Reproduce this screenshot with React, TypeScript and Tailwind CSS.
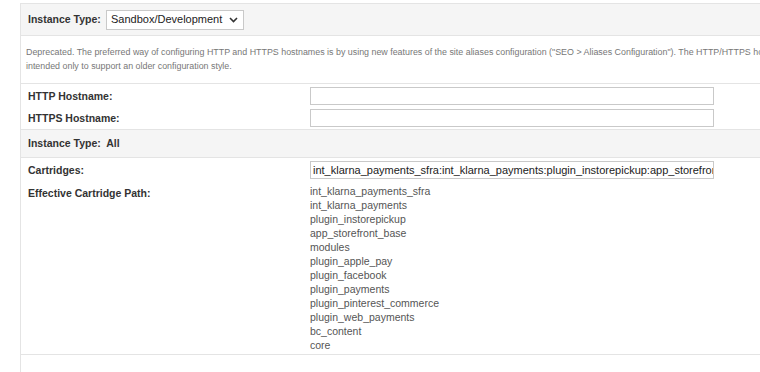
const cartridges = [
  "int_klarna_payments_sfra",
  "int_klarna_payments",
  "plugin_instorepickup",
  "app_storefront_base",
  "modules",
  "plugin_apple_pay",
  "plugin_facebook",
  "plugin_payments",
  "plugin_pinterest_commerce",
  "plugin_web_payments",
  "bc_content",
  "core",
];

const cartridgePath = cartridges.join(":");

function FieldRow({ label, children }: { label: string; children: React.ReactNode }) {
  return (
    <div className="flex items-start">
      <div className="w-[289px] shrink-0 pl-[7px] font-bold text-[#333] leading-[18px]">
        {label}
      </div>
      <div className="flex-1">{children}</div>
    </div>
  );
}

function TextInput({ value = "" }: { value?: string }) {
  return (
    <div className="w-[404px] h-[18px] border border-[#c9c9c9] bg-white px-[2px] overflow-hidden whitespace-nowrap text-[11px] leading-[16px] text-[#222]">
      {value}
    </div>
  );
}

export default function App() {
  return (
    <div
      className="w-[760px] h-[372px] overflow-hidden bg-white text-[10.5px]"
      style={{ fontFamily: '"Liberation Sans", Arial, sans-serif' }}
    >
      <div className="ml-[20px] mt-[3px] w-[820px] border-l border-t border-[#e4e4e4]">
        {/* Instance type selector */}
        <div className="h-[32px] bg-[#f5f5f5] border-b border-[#e4e4e4] flex items-center pl-[7px]">
          <span className="font-bold text-[#333] w-[78px]">Instance Type:</span>
          <div className="h-[20px] w-[138px] border border-[#c9c9c9] bg-white flex items-center pl-[4px] gap-[7px] text-[11px] text-[#222]">
            <span>Sandbox/Development</span>
            <svg width="9" height="6" viewBox="0 0 9 6" fill="none">
              <path d="M1 1l3.5 3.5L8 1" stroke="#333" strokeWidth="1.6" />
            </svg>
          </div>
        </div>

        {/* Deprecation note */}
        <div className="border-b border-[#e4e4e4] pl-[5px] pt-[9px] pb-[10px] text-[8.9px] leading-[14px] text-[#777] whitespace-nowrap">
          Deprecated. The preferred way of configuring HTTP and HTTPS hostnames is by using new features of the site aliases configuration ("SEO &gt; Aliases Configuration"). The HTTP/HTTPS hostnames are
          <br />
          intended only to support an older configuration style.
        </div>

        {/* Hostnames */}
        <div className="pt-[3px] pb-[2px] flex flex-col gap-[4px]">
          <FieldRow label="HTTP Hostname:">
            <TextInput />
          </FieldRow>
          <FieldRow label="HTTPS Hostname:">
            <TextInput />
          </FieldRow>
        </div>

        {/* Instance type all */}
        <div className="h-[29px] bg-[#f5f5f5] border-y border-[#e4e4e4] flex items-center pl-[7px] font-bold text-[#333]">
          Instance Type:&nbsp; All
        </div>

        {/* Cartridges */}
        <div className="pt-[3px] pb-[2px] border-b border-[#e4e4e4] flex flex-col gap-[5px]">
          <FieldRow label="Cartridges:">
            <TextInput value={cartridgePath} />
          </FieldRow>
          <FieldRow label="Effective Cartridge Path:">
            <div className="text-[#555] leading-[14px]">
              {cartridges.map((c) => (
                <div key={c}>{c}</div>
              ))}
            </div>
          </FieldRow>
        </div>
        <div className="h-[30px]" />
      </div>
    </div>
  );
}
